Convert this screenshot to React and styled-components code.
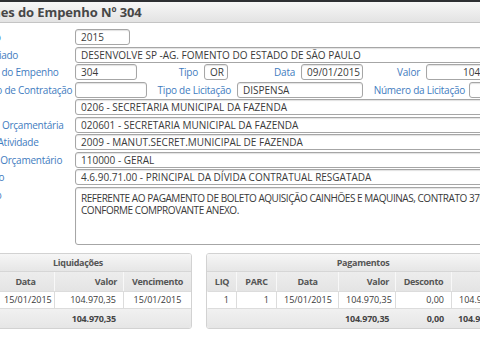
import React from 'react';
import styled, { createGlobalStyle } from 'styled-components';

const GlobalStyle = createGlobalStyle`
  html, body {
    margin: 0;
    padding: 0;
    overflow: hidden;
    background: #ffffff;
  }
  body {
    font-family: "Open Sans", "Noto Sans", sans-serif;
    color: #333;
  }
`;

const Page = styled.div`
  width: 562px;
  margin-left: -42px;
  border-top: 2px solid #2e3033;
`;

const Header = styled.div`
  height: 20px;
  display: flex;
  align-items: center;
  background: linear-gradient(#f7f7f7, #e3e3e3);
  border-bottom: 1px solid #c4c4c4;
  font-size: 13px;
  font-weight: 700;
  letter-spacing: -0.1px;
  color: #474747;
`;

const Form = styled.div`
  display: flex;
  flex-direction: column;
  gap: 1.5px;
  padding-top: 6px;
`;

const Row = styled.div`
  display: flex;
  align-items: flex-start;
`;

const Label = styled.div`
  width: 117px;
  flex-shrink: 0;
  box-sizing: border-box;
  padding-left: 4px;
  white-space: nowrap;
  overflow: hidden;
  font-size: 10px;
  letter-spacing: -0.25px;
  line-height: 16px;
  color: #3f7cc0;
`;

const InlineLabel = styled.div`
  width: ${p => p.$w}px;
  flex-shrink: 0;
  padding-right: ${p => p.$pad ?? 6}px;
  box-sizing: border-box;
  text-align: right;
  white-space: nowrap;
  font-size: 10px;
  letter-spacing: -0.25px;
  line-height: 16px;
  color: #3f7cc0;
`;

const Field = styled.div`
  box-sizing: border-box;
  height: ${p => p.$h ?? 16}px;
  width: ${p => (p.$w ? `${p.$w}px` : 'auto')};
  flex: ${p => (p.$w ? '0 0 auto' : '1 1 auto')};
  border: 1px solid #a6a6a6;
  border-radius: 3px;
  box-shadow: inset 0 1px 1px rgba(0, 0, 0, 0.12);
  padding: ${p => (p.$multi ? '4px 5px' : '0 5px')};
  font-size: 10px;
  letter-spacing: ${p => (p.$multi ? '-0.45px' : '0')};
  line-height: ${p => (p.$multi ? '12px' : '14px')};
  color: #3a3a3a;
  text-align: ${p => (p.$right ? 'right' : 'left')};
  white-space: ${p => (p.$multi ? 'pre' : 'nowrap')};
  overflow: hidden;
  background: #fff;
`;

const Tables = styled.div`
  display: flex;
  gap: 14px;
  margin-top: 8px;
  padding-left: 6px;
`;

const Grid = styled.table`
  border-collapse: separate;
  border-spacing: 0;
  table-layout: fixed;
  width: ${p => p.$w}px;
  border: 1px solid #d2d2d2;
  border-radius: 3px;
  overflow: hidden;
  font-size: 9px;
  color: #3a3a3a;
`;

const Title = styled.th`
  height: 17px;
  padding: 0;
  background: linear-gradient(#f6f6f6, #e6e6e6);
  border-bottom: 1px solid #d6d6d6;
  font-weight: 700;
  letter-spacing: -0.3px;
  color: #555;
  text-align: center;
`;

const Head = styled.th`
  height: 19px;
  padding: 0 6px;
  background: linear-gradient(#ededed, #e4e4e4);
  border-left: 1px solid ${p => (p.$first ? 'transparent' : '#f8f8f8')};
  font-weight: 700;
  letter-spacing: -0.3px;
  color: #555;
  text-align: ${p => p.$align || 'center'};
  white-space: nowrap;
  overflow: hidden;
`;

const Cell = styled.td`
  height: 16px;
  padding: 0 7px;
  background: #fff;
  border-top: 1px solid #dcdcdc;
  border-bottom: 1px solid #dcdcdc;
  border-left: 1px solid ${p => (p.$first ? 'transparent' : '#dcdcdc')};
  text-align: ${p => p.$align || 'center'};
  white-space: nowrap;
  overflow: hidden;
`;

const Foot = styled.td`
  height: 19px;
  padding: 0 7px;
  background: linear-gradient(#f1f1f1, #e6e6e6);
  font-weight: 700;
  letter-spacing: -0.2px;
  color: #444;
  text-align: ${p => p.$align || 'right'};
  white-space: nowrap;
  overflow: hidden;
`;

const liqCols = [31, 58, 69, 68];
const pagCols = [29, 40, 62, 57, 56, 68];

const Cols = ({ widths }) => (
  <colgroup>
    {widths.map((w, i) => <col key={i} style={{ width: w }} />)}
  </colgroup>
);

export default function App() {
  return (
    <>
      <GlobalStyle />
      <Page>
        <Header>Detalhes do Empenho Nº 304</Header>
        <Form>
          <Row>
            <Label>Exercício</Label>
            <Field $w={55}>2015</Field>
          </Row>
          <Row>
            <Label>Credenciado</Label>
            <Field>DESENVOLVE SP -AG. FOMENTO DO ESTADO DE SÃO PAULO</Field>
          </Row>
          <Row>
            <Label>Número do Empenho</Label>
            <Field $w={62}>304</Field>
            <InlineLabel $w={67}>Tipo</InlineLabel>
            <Field $w={24}>OR</Field>
            <InlineLabel $w={73}>Data</InlineLabel>
            <Field $w={62}>09/01/2015</Field>
            <InlineLabel $w={63}>Valor</InlineLabel>
            <Field $right>104.970,35</Field>
          </Row>
          <Row>
            <Label>Processo de Contratação</Label>
            <Field $w={72}></Field>
            <InlineLabel $w={90}>Tipo de Licitação</InlineLabel>
            <Field $w={126}>DISPENSA</Field>
            <InlineLabel $w={106} $pad={4}>Número da Licitação</InlineLabel>
            <Field></Field>
          </Row>
          <Row>
            <Label>Órgão</Label>
            <Field>0206 - SECRETARIA MUNICIPAL DA FAZENDA</Field>
          </Row>
          <Row>
            <Label>Unidade Orçamentária</Label>
            <Field>020601 - SECRETARIA MUNICIPAL DA FAZENDA</Field>
          </Row>
          <Row>
            <Label>Projeto/Atividade</Label>
            <Field>2009 - MANUT.SECRET.MUNICIPAL DE FAZENDA</Field>
          </Row>
          <Row>
            <Label>Recurso Orçamentário</Label>
            <Field>110000 - GERAL</Field>
          </Row>
          <Row>
            <Label>Elemento</Label>
            <Field>4.6.90.71.00 - PRINCIPAL DA DÍVIDA CONTRATUAL RESGATADA</Field>
          </Row>
          <Row>
            <Label>Histórico</Label>
            <Field $h={58} $multi>
              {'REFERENTE AO PAGAMENTO DE BOLETO AQUISIÇÃO CAINHÕES E MAQUINAS, CONTRATO 3762/2014,\nCONFORME COMPROVANTE ANEXO.'}
            </Field>
          </Row>
        </Form>

        <Tables>
          <Grid $w={226}>
            <Cols widths={liqCols} />
            <thead>
              <tr><Title colSpan={4}>Liquidações</Title></tr>
              <tr>
                <Head $first>Nº</Head>
                <Head>Data</Head>
                <Head $align="right">Valor</Head>
                <Head>Vencimento</Head>
              </tr>
            </thead>
            <tbody>
              <tr>
                <Cell $first $align="right">1</Cell>
                <Cell>15/01/2015</Cell>
                <Cell $align="right">104.970,35</Cell>
                <Cell>15/01/2015</Cell>
              </tr>
              <tr>
                <Foot colSpan={2}></Foot>
                <Foot>104.970,35</Foot>
                <Foot></Foot>
              </tr>
            </tbody>
          </Grid>

          <Grid $w={312}>
            <Cols widths={pagCols} />
            <thead>
              <tr><Title colSpan={6}>Pagamentos</Title></tr>
              <tr>
                <Head $first>LIQ</Head>
                <Head>PARC</Head>
                <Head>Data</Head>
                <Head $align="right">Valor</Head>
                <Head>Desconto</Head>
                <Head $align="right">Líquido</Head>
              </tr>
            </thead>
            <tbody>
              <tr>
                <Cell $first $align="right">1</Cell>
                <Cell $align="right">1</Cell>
                <Cell>15/01/2015</Cell>
                <Cell $align="right">104.970,35</Cell>
                <Cell $align="right">0,00</Cell>
                <Cell $align="left">104.970,35</Cell>
              </tr>
              <tr>
                <Foot colSpan={3}></Foot>
                <Foot>104.970,35</Foot>
                <Foot>0,00</Foot>
                <Foot $align="left">104.970,35</Foot>
              </tr>
            </tbody>
          </Grid>
        </Tables>
      </Page>
    </>
  );
}
